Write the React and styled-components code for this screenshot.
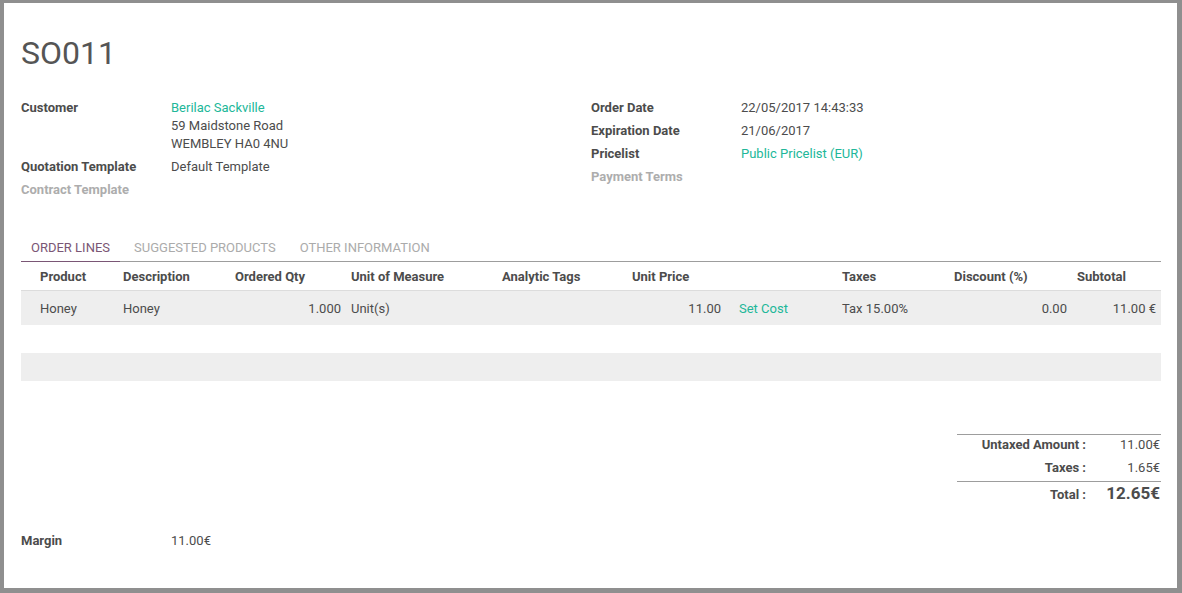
import React from "react";
import styled, { createGlobalStyle } from "styled-components";

const Global = createGlobalStyle`
  html, body {
    margin: 0;
    background: #8f8f8f;
  }
  body {
    padding: 3px 5px 5px 4px;
    font-family: Roboto, "Noto Sans", Arial, sans-serif;
    font-size: 13px;
    line-height: 18px;
    color: #4c4c4c;
  }
`;

const Sheet = styled.div`
  box-sizing: border-box;
  width: 1173px;
  height: 585px;
  background: #fff;
  padding: 30px 16px 0 17px;
  display: flex;
  flex-direction: column;
`;

const Title = styled.h1`
  margin: 0;
  font-size: 32px;
  line-height: 40px;
  font-weight: 400;
  color: #555;
`;

const Groups = styled.div`
  margin-top: 25px;
  display: grid;
  grid-template-columns: 570px 570px;
`;

const FieldGroup = styled.div`
  display: grid;
  grid-template-columns: 150px 1fr;
  align-content: start;
`;

const Label = styled.div`
  font-weight: 700;
  color: ${(p) => (p.$muted ? "#adadad" : "#4c4c4c")};
  padding: 1px 0 4px;
`;

const Value = styled.div`
  padding: 1px 0 4px;
  color: ${(p) => (p.$link ? "#21b799" : "#4c4c4c")};
`;

const LinkText = styled.span`
  color: #21b799;
`;

const Tabs = styled.div`
  margin-top: 26px;
  display: flex;
  border-bottom: 1px solid #9d9d9d;
`;

const Tab = styled.div`
  padding: 10px 10px 4px;
  margin-right: 4px;
  margin-bottom: -1px;
  text-transform: uppercase;
  color: ${(p) => (p.$active ? "#7a5675" : "#ababab")};
  border-bottom: 1px solid ${(p) => (p.$active ? "#7a5675" : "transparent")};
`;

const COLS = "94px 112px 116px 151px 130px 107px 103px 112px 123px 92px";

const HeadRow = styled.div`
  display: grid;
  grid-template-columns: ${COLS};
  border-bottom: 1px solid #dcdcdc;
`;

const Row = styled.div`
  display: grid;
  grid-template-columns: ${COLS};
  background: ${(p) => (p.$striped ? "#eeeeee" : "#fff")};
  height: ${(p) => (p.$empty ? "28px" : "auto")};
`;

const HeadCell = styled.div`
  padding: 6px 0 4px ${(p) => (p.$first ? "19px" : "8px")};
  font-weight: 700;
  white-space: nowrap;
`;

const Cell = styled.div`
  padding: 9px ${(p) => p.$pr || "0px"} 7px ${(p) => (p.$first ? "19px" : "8px")};
  text-align: ${(p) => (p.$num ? "right" : "left")};
  color: ${(p) => (p.$link ? "#21b799" : "#4c4c4c")};
  white-space: nowrap;
`;

const Totals = styled.div`
  margin-top: 53px;
  margin-left: auto;
  width: 204px;
  border-top: 1px solid #9d9d9d;
  display: grid;
  grid-template-columns: 129px 75px;
`;

const TotLabel = styled.div`
  text-align: right;
  font-weight: 700;
  padding: 1px 0 4px;
  ${(p) =>
    p.$grand &&
    `border-top: 1px solid #9d9d9d; padding: 2px 0 0; line-height: 22px;`}
`;

const TotValue = styled.div`
  text-align: right;
  padding: 1px 1px 4px 0;
  ${(p) =>
    p.$grand &&
    `border-top: 1px solid #9d9d9d; padding: 0 1px 0 0; line-height: 22px; font-size: 17px; font-weight: 700;`}
`;

const MarginGroup = styled(FieldGroup)`
  margin-top: 25px;
`;

export default function App() {
  return (
    <>
      <Global />
      <Sheet>
        <Title>SO011</Title>
        <Groups>
          <FieldGroup>
            <Label>Customer</Label>
            <Value>
              <LinkText>Berilac Sackville</LinkText>
              <br />
              59 Maidstone Road
              <br />
              WEMBLEY HA0 4NU
            </Value>
            <Label>Quotation Template</Label>
            <Value>Default Template</Value>
            <Label $muted>Contract Template</Label>
            <Value />
          </FieldGroup>
          <FieldGroup>
            <Label>Order Date</Label>
            <Value>22/05/2017 14:43:33</Value>
            <Label>Expiration Date</Label>
            <Value>21/06/2017</Value>
            <Label>Pricelist</Label>
            <Value $link>Public Pricelist (EUR)</Value>
            <Label $muted>Payment Terms</Label>
            <Value />
          </FieldGroup>
        </Groups>

        <Tabs>
          <Tab $active>Order Lines</Tab>
          <Tab>Suggested Products</Tab>
          <Tab>Other Information</Tab>
        </Tabs>

        <HeadRow>
          <HeadCell $first>Product</HeadCell>
          <HeadCell>Description</HeadCell>
          <HeadCell>Ordered Qty</HeadCell>
          <HeadCell>Unit of Measure</HeadCell>
          <HeadCell>Analytic Tags</HeadCell>
          <HeadCell>Unit Price</HeadCell>
          <HeadCell />
          <HeadCell>Taxes</HeadCell>
          <HeadCell>Discount (%)</HeadCell>
          <HeadCell>Subtotal</HeadCell>
        </HeadRow>
        <Row $striped>
          <Cell $first>Honey</Cell>
          <Cell>Honey</Cell>
          <Cell $num $pr="2px">1.000</Cell>
          <Cell>Unit(s)</Cell>
          <Cell />
          <Cell $num $pr="10px">11.00</Cell>
          <Cell $link>Set Cost</Cell>
          <Cell>Tax 15.00%</Cell>
          <Cell $num $pr="2px">0.00</Cell>
          <Cell $num $pr="5px">11.00 €</Cell>
        </Row>
        <Row $empty />
        <Row $empty $striped />

        <Totals>
          <TotLabel>Untaxed Amount :</TotLabel>
          <TotValue>11.00€</TotValue>
          <TotLabel>Taxes :</TotLabel>
          <TotValue>1.65€</TotValue>
          <TotLabel $grand>Total :</TotLabel>
          <TotValue $grand>12.65€</TotValue>
        </Totals>

        <MarginGroup>
          <Label>Margin</Label>
          <Value>11.00€</Value>
        </MarginGroup>
      </Sheet>
    </>
  );
}
